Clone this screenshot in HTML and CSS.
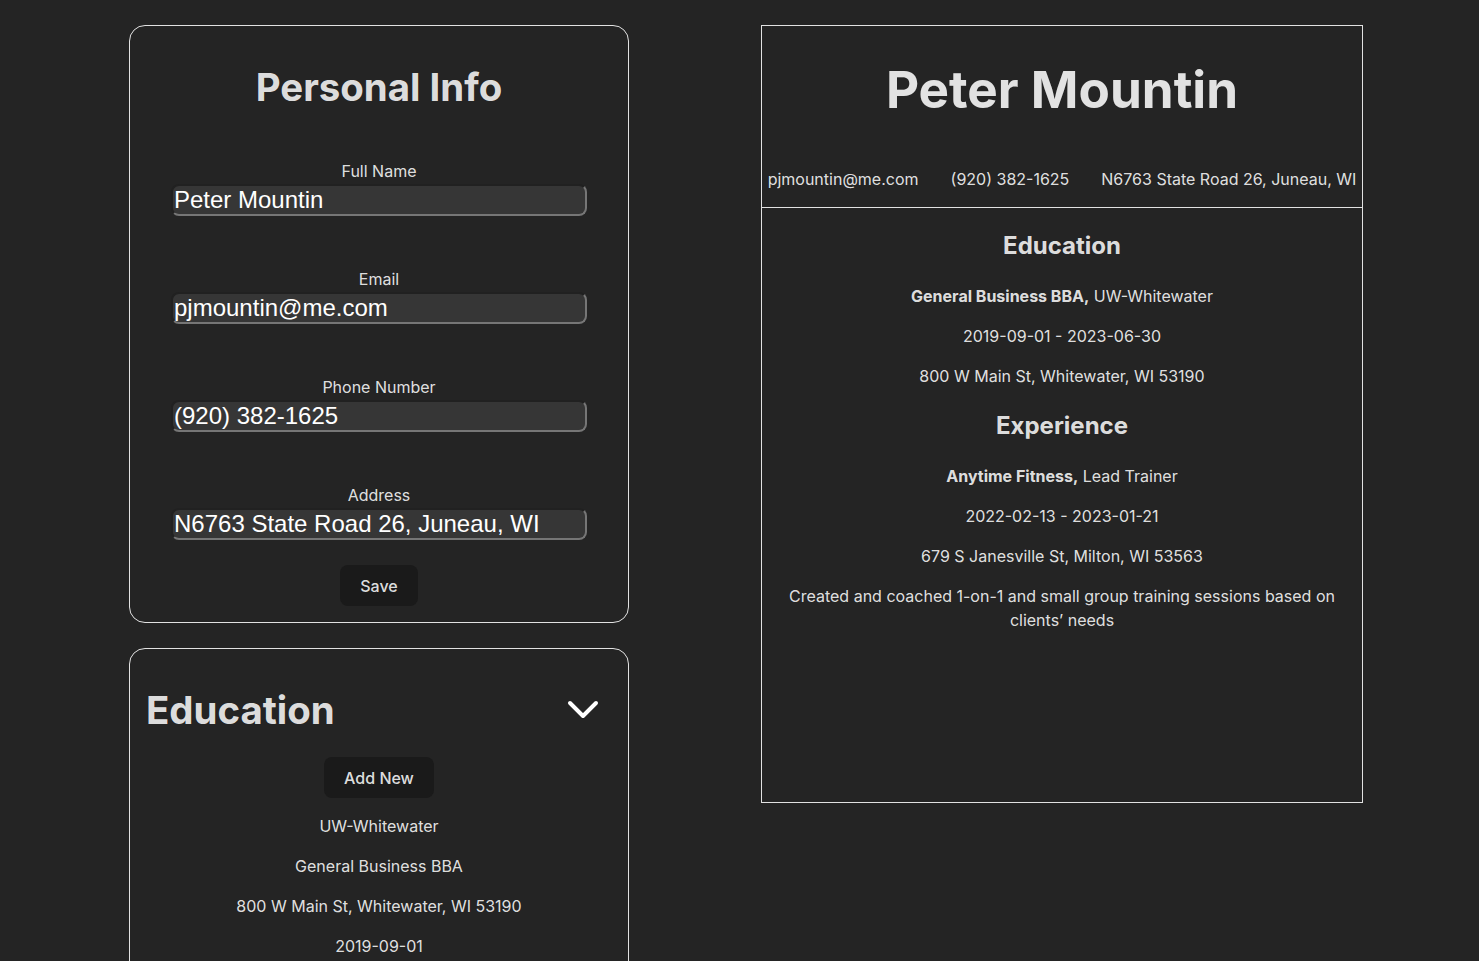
FILE: index.html
```html
<!DOCTYPE html>
<html lang="en">
<head>
<meta charset="utf-8">
<title>CV Builder</title>
<link rel="stylesheet" href="styles.css">
</head>
<body>
<div class="app">
  <div class="editor">
    <section class="card personal">
      <h1 class="card-title">Personal Info</h1>
      <form class="form">
        <div class="fields">
          <div class="field">
            <label class="label" for="name">Full Name</label>
            <input class="input" id="name" type="text" value="Peter Mountin">
          </div>
          <div class="field">
            <label class="label" for="email">Email</label>
            <input class="input" id="email" type="text" value="pjmountin@me.com">
          </div>
          <div class="field">
            <label class="label" for="phone">Phone Number</label>
            <input class="input" id="phone" type="text" value="(920) 382-1625">
          </div>
          <div class="field">
            <label class="label" for="address">Address</label>
            <input class="input" id="address" type="text" value="N6763 State Road 26, Juneau, WI">
          </div>
        </div>
        <button class="btn save" type="button">Save</button>
      </form>
    </section>
    <section class="card education">
      <div class="card-head">
        <h2 class="section-title">Education</h2>
        <svg class="chevron" width="32" height="20" viewBox="0 0 32 20" aria-hidden="true">
          <polyline points="3,3 16,16 29,3" fill="none" stroke="#ffffff" stroke-width="4" stroke-linecap="round" stroke-linejoin="round"/>
        </svg>
      </div>
      <div class="card-body">
        <button class="btn add" type="button">Add New</button>
        <p class="entry-line">UW-Whitewater</p>
        <p class="entry-line">General Business BBA</p>
        <p class="entry-line">800 W Main St, Whitewater, WI 53190</p>
        <p class="entry-line">2019-09-01</p>
      </div>
    </section>
  </div>
  <article class="resume">
    <header class="resume-head">
      <h1 class="resume-name">Peter Mountin</h1>
      <div class="contact">
        <span>pjmountin@me.com</span>
        <span>(920) 382-1625</span>
        <span>N6763 State Road 26, Juneau, WI</span>
      </div>
    </header>
    <div class="resume-body">
      <h2 class="resume-section">Education</h2>
      <p class="resume-line"><strong>General Business BBA,</strong> UW-Whitewater</p>
      <p class="resume-line">2019-09-01 - 2023-06-30</p>
      <p class="resume-line">800 W Main St, Whitewater, WI 53190</p>
      <h2 class="resume-section">Experience</h2>
      <p class="resume-line"><strong>Anytime Fitness,</strong> Lead Trainer</p>
      <p class="resume-line">2022-02-13 - 2023-01-21</p>
      <p class="resume-line">679 S Janesville St, Milton, WI 53563</p>
      <p class="resume-line">Created and coached 1-on-1 and small group training sessions based on clients’ needs</p>
    </div>
  </article>
</div>
</body>
</html>
```

FILE: styles.css
```css
* {
  box-sizing: border-box;
}

html, body {
  margin: 0;
  height: 100%;
  overflow: hidden;
}

body {
  background: #242424;
  color: rgba(255, 255, 255, 0.87);
  font-family: Inter, "Noto Sans", sans-serif;
  font-size: 16px;
  line-height: 24px;
}

.app {
  display: flex;
  align-items: flex-start;
  gap: 132px;
  padding: 25px 0 0 129px;
}

.editor {
  width: 500px;
  display: flex;
  flex-direction: column;
  gap: 25px;
}

.card {
  border: 1px solid rgba(255, 255, 255, 0.87);
  border-radius: 16px;
}

.personal {
  padding: 39px 0 16px;
}

.card-title {
  margin: 0 0 52px;
  font-size: 38.4px;
  line-height: 44px;
  font-weight: 700;
  text-align: center;
}

.form {
  display: flex;
  flex-direction: column;
  align-items: center;
}

.fields {
  display: flex;
  flex-direction: column;
  gap: 53px;
}

.field {
  display: flex;
  flex-direction: column;
  align-items: center;
  gap: 3px;
}

.label {
  font-size: 16px;
  line-height: 20px;
  color: rgba(255, 255, 255, 0.87);
}

.input {
  width: 416px;
  height: 32px;
  padding: 0 1px;
  font-family: "Liberation Sans", Arial, sans-serif;
  font-size: 24px;
  color: #ffffff;
  background: #363636;
  border: 2px inset #767676;
  border-radius: 8px;
  outline: none;
}

.btn {
  font-family: inherit;
  font-size: 16px;
  font-weight: 500;
  line-height: normal;
  color: rgba(255, 255, 255, 0.87);
  background: #1a1a1a;
  border: 1px solid transparent;
  border-radius: 8px;
  padding: 9.6px 19.2px;
  cursor: pointer;
}

.save {
  margin-top: 25px;
}

.education {
  padding: 39px 0 0;
  height: 400px;
}

.card-head {
  display: flex;
  justify-content: space-between;
  align-items: center;
  padding: 0 29px 0 16px;
}

.section-title {
  margin: 0;
  font-size: 38.4px;
  line-height: 44px;
  font-weight: 700;
}

.chevron {
  display: block;
}

.card-body {
  display: flex;
  flex-direction: column;
  align-items: center;
  padding-top: 25px;
}

.entry-line {
  margin: 16px 0 0;
}

.resume {
  width: 602px;
  height: 778px;
  border: 1px solid rgba(255, 255, 255, 0.87);
  text-align: center;
}

.resume-head {
  padding: 35px 0 16px;
  border-bottom: 1px solid rgba(255, 255, 255, 0.87);
}

.resume-name {
  margin: 0 0 50px;
  font-size: 51.2px;
  line-height: 56px;
  font-weight: 700;
}

.contact {
  display: flex;
  justify-content: center;
  gap: 32px;
  white-space: nowrap;
}

.resume-body {
  padding: 0 8px;
}

.resume-section {
  margin: 23px 0 23px;
  font-size: 24px;
  line-height: 30px;
  font-weight: 700;
}

.resume-line {
  margin: 16px 0;
}

.resume-line strong {
  font-weight: 700;
}
```
